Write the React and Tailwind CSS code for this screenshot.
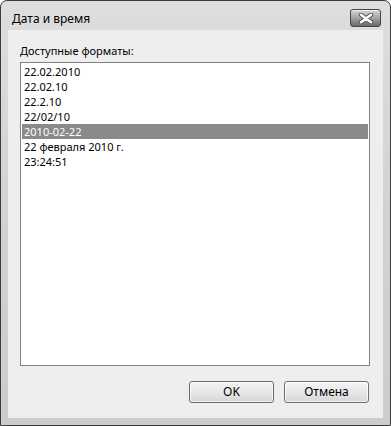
import React from 'react';

const formats = [
  '22.02.2010',
  '22.02.10',
  '22.2.10',
  '22/02/10',
  '2010-02-22',
  '22 февраля 2010 г.',
  '23:24:51',
];

const CloseGlyph = () => (
  <svg width="16" height="11" viewBox="0 0 16 11">
    <path
      d="M3 1.8 L8 5.5 L13 1.8 M3 9.2 L8 5.5 L13 9.2"
      fill="none"
      stroke="#505050"
      strokeWidth="4.4"
      strokeLinecap="round"
      strokeLinejoin="round"
    />
    <path
      d="M3 1.8 L8 5.5 L13 1.8 M3 9.2 L8 5.5 L13 9.2"
      fill="none"
      stroke="#ffffff"
      strokeWidth="2.6"
      strokeLinecap="round"
      strokeLinejoin="round"
    />
  </svg>
);

export default function App() {
  const selected = 4;

  return (
    <div className="w-[391px] h-[426px] bg-white" style={{ fontFamily: '"Noto Sans", "Open Sans", sans-serif' }}>
      <div className="w-full h-full flex flex-col rounded-t-[7px] border border-[#3c3c3c] bg-gradient-to-b from-[#dedede] via-[#d2d2d2] to-[#cccccc] px-[7px] pb-[7px]">
        {/* title bar */}
        <div className="h-[29px] shrink-0 flex justify-between">
          <span className="pl-[4px] pt-[10px] text-[12px] leading-[16px] text-black">Дата и время</span>
          <button className="mt-[8px] mr-[2px] w-[31px] h-[18px] rounded-[3px] border border-[#454545] bg-gradient-to-b from-[#d8d8d8] via-[#a4a4a4] to-[#6a6a6a] flex items-center justify-center shadow-[inset_0_1px_0_rgba(255,255,255,0.6)]">
            <CloseGlyph />
          </button>
        </div>

        {/* client area */}
        <div className="flex-1 bg-[#eeeeee] flex flex-col pl-[12px] pr-[13px] pt-[13px] pb-[14px]">
          <div className="text-[11px] leading-[16px] text-black">Доступные форматы:</div>
          <div className="mt-[3px] h-[304px] border border-[#828282] bg-white px-[1px] pt-[1px]">
            {formats.map((f, i) => (
              <div
                key={f}
                className={`h-[15px] px-[2px] text-[11px] leading-[15px] whitespace-nowrap ${
                  i === selected ? 'bg-[#8a8a8a] text-white' : 'text-black'
                }`}
              >
                {f}
              </div>
            ))}
          </div>
          <div className="mt-[15px] flex justify-end gap-[10px] pr-[1px]">
            <button className="w-[85px] h-[22px] rounded-[3px] border border-[#6a6a6a] bg-gradient-to-b from-[#f4f4f4] via-[#e8e8e8] to-[#d6d6d6] text-[12px] leading-[16px] text-black shadow-[inset_0_0_0_1px_rgba(255,255,255,0.7)]">
              OK
            </button>
            <button className="w-[85px] h-[22px] rounded-[3px] border border-[#707070] bg-gradient-to-b from-[#f4f4f4] via-[#e8e8e8] to-[#d6d6d6] text-[12px] leading-[16px] text-black shadow-[inset_0_0_0_1px_rgba(255,255,255,0.7)]">
              Отмена
            </button>
          </div>
        </div>
      </div>
    </div>
  );
}
